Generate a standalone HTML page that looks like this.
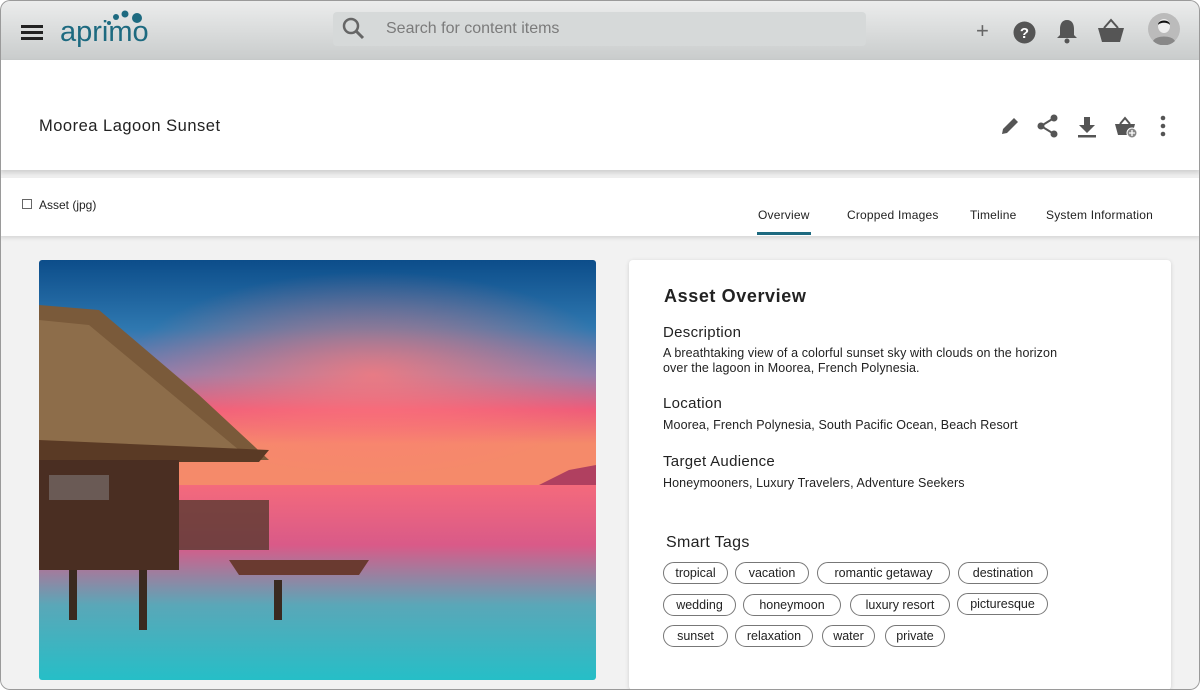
<!DOCTYPE html>
<html><head><meta charset="utf-8"><style>
*{box-sizing:border-box;margin:0;padding:0}
body{width:1200px;height:670px;overflow:hidden;background:#fff;font-family:"Liberation Sans",sans-serif;color:#222}
.frame{position:absolute;left:0;top:0;width:1200px;height:690px;border-radius:10px;overflow:hidden;background:#f2f2f2}
.bord{position:absolute;left:0;top:0;width:1200px;height:690px;border:1px solid #9a9a9a;border-radius:10px;pointer-events:none}
.hdr{position:absolute;left:0;top:0;width:100%;height:60px;background:linear-gradient(#eceded,#c9cccc)}
.search{position:absolute;left:333px;top:12px;width:533px;height:34px;background:#d6d9d9;border-radius:4px;color:#7b7b7b;font-size:16px;line-height:34px;padding-left:53px}
.title{position:absolute;left:0;top:60px;width:100%;height:110px;background:#fff;box-shadow:0 3px 5px rgba(0,0,0,.15)}
.tabs{position:absolute;left:0;top:178px;width:100%;height:58px;background:#fff;box-shadow:0 2px 4px rgba(0,0,0,.12)}
.tab{position:absolute;top:30px;font-size:12px;color:#222;letter-spacing:.2px}
.card{position:absolute;left:629px;top:260px;width:542px;height:430px;background:#fff;border-radius:4px;box-shadow:0 1px 4px rgba(0,0,0,.15)}
.card h2{position:absolute;left:35px;top:26px;font-size:18px;font-weight:bold;letter-spacing:.6px;color:#222}
.h3{position:absolute;left:34px;font-size:15px;color:#222;letter-spacing:.3px}
.p{position:absolute;left:34px;font-size:12.5px;line-height:15px;color:#222;letter-spacing:.1px}
.tag{position:absolute;height:22px;border:1px solid #777;border-radius:11px;font-size:12.5px;line-height:20px;text-align:center;color:#222}
</style></head><body><div class="frame">
<div class="hdr">
<div style="position:absolute;left:21px;top:25px;width:22px;height:3px;background:#222;box-shadow:0 6px 0 #222,0 12px 0 #222"></div>
<div style="position:absolute;left:60px;top:16px;font-size:29px;color:#1d6a80;letter-spacing:0">aprimo</div>
<svg style="position:absolute;left:104px;top:9px" width="42" height="18"><circle cx="5" cy="14" r="2" fill="#1d6a80"/><circle cx="12" cy="8" r="3" fill="#1d6a80"/><circle cx="21" cy="5" r="3.5" fill="#1d6a80"/><circle cx="33" cy="9" r="5" fill="#1d6a80"/></svg>
<div class="search">Search for content items</div>
<svg style="position:absolute;left:342px;top:17px" width="24" height="24"><circle cx="9" cy="9" r="7" fill="none" stroke="#666" stroke-width="2.5"/><path d="M14 14l7 7" stroke="#666" stroke-width="3"/></svg>
<div style="position:absolute;left:976px;top:18px;font-size:22px;color:#666">+</div>
<svg style="position:absolute;left:1013px;top:21px" width="23" height="23"><circle cx="11.5" cy="11.5" r="11" fill="#555"/><text x="11.5" y="17" font-size="15" font-weight="bold" fill="#fff" text-anchor="middle" font-family="Liberation Sans">?</text></svg>
<svg style="position:absolute;left:1055px;top:18px" width="24" height="28"><path d="M12 2c-5 0-7 4-7 9v6l-3 3h20l-3-3v-6c0-5-2-9-7-9z" fill="#555"/><circle cx="12" cy="23" r="2.5" fill="#555"/></svg>
<svg style="position:absolute;left:1096px;top:17px" width="30" height="28"><path d="M2 11h26l-4 14H6z" fill="#555"/><path d="M8 11l7-8 7 8" fill="none" stroke="#555" stroke-width="2"/></svg>
<svg style="position:absolute;left:1148px;top:13px" width="32" height="32"><circle cx="16" cy="16" r="16" fill="#bbb"/><ellipse cx="16" cy="13" rx="6" ry="7" fill="#eee"/><path d="M10 12c0-6 12-6 12 0c-2-3-10-3-12 0z" fill="#111"/><path d="M5 28c3-6 19-6 22 0a16 16 0 0 1-22 0z" fill="#888"/></svg>
</div>
<div class="title">
<div style="position:absolute;left:39px;top:57px;font-size:16.5px;letter-spacing:.5px;color:#222">Moorea Lagoon Sunset</div>
<svg style="position:absolute;left:999px;top:55px" width="22" height="22"><path d="M3 19l1-5 11-11 4 4-11 11z" fill="#555"/></svg>
<svg style="position:absolute;left:1037px;top:54px" width="22" height="24"><circle cx="17" cy="4" r="3.5" fill="#555"/><circle cx="4" cy="12" r="3.5" fill="#555"/><circle cx="17" cy="20" r="3.5" fill="#555"/><path d="M17 4L4 12l13 8" fill="none" stroke="#555" stroke-width="2"/></svg>
<svg style="position:absolute;left:1076px;top:56px" width="22" height="22"><path d="M8 1h6v8h5l-8 8-8-8h5z" fill="#555"/><rect x="2" y="19" width="18" height="2.5" fill="#555"/></svg>
<svg style="position:absolute;left:1114px;top:55px" width="26" height="24"><path d="M1 9h20l-3 11H4z" fill="#555"/><path d="M6 9l5-6 5 6" fill="none" stroke="#555" stroke-width="2"/><circle cx="18" cy="18" r="5" fill="#888" stroke="#fff"/><path d="M18 15v6M15 18h6" stroke="#fff" stroke-width="1.3"/></svg>
<svg style="position:absolute;left:1158px;top:55px" width="10" height="22"><circle cx="5" cy="3" r="2.3" fill="#555"/><circle cx="5" cy="11" r="2.3" fill="#555"/><circle cx="5" cy="19" r="2.3" fill="#555"/></svg>
</div>
<div class="tabs">
<div style="position:absolute;left:22px;top:21px;width:10px;height:10px;border:1px solid #666"></div>
<div style="position:absolute;left:39px;top:20px;font-size:12px">Asset (jpg)</div>
<div class="tab" style="left:758px">Overview</div>
<div style="position:absolute;left:757px;top:54px;width:54px;height:3px;background:#1d6a80"></div>
<div class="tab" style="left:847px">Cropped Images</div>
<div class="tab" style="left:970px">Timeline</div>
<div class="tab" style="left:1046px">System Information</div>
</div>
<svg style="position:absolute;left:39px;top:260px;border-radius:3px" width="557" height="420">
<defs>
<linearGradient id="sky" x1="0" y1="0" x2="0" y2="1"><stop offset="0" stop-color="#0c4d8a"/><stop offset=".3" stop-color="#2f78b0"/><stop offset=".5" stop-color="#8a7fb0"/><stop offset=".65" stop-color="#ee5a7a"/><stop offset=".8" stop-color="#f58a6a"/></linearGradient>
<linearGradient id="sea" x1="0" y1="0" x2="0" y2="1"><stop offset="0" stop-color="#f46a7c"/><stop offset=".3" stop-color="#d95a88"/><stop offset=".6" stop-color="#5aa7b8"/><stop offset="1" stop-color="#22c0c8"/></linearGradient>
<radialGradient id="glow" cx=".6" cy=".5" r=".45"><stop offset="0" stop-color="#ff7a7a" stop-opacity=".8"/><stop offset="1" stop-color="#ff7a7a" stop-opacity="0"/></radialGradient>
</defs>
<rect width="557" height="230" fill="url(#sky)"/>
<rect width="557" height="230" fill="url(#glow)"/>
<path d="M500 225l30-15 27-5v20z" fill="#b04060"/>
<rect y="225" width="557" height="200" fill="url(#sea)"/>
<path d="M0 45l60 5 100 85 70 65H0z" fill="#7a5a3a"/>
<path d="M0 60l50 5 90 75 60 50H0z" fill="#9a7a55" opacity=".6"/>
<path d="M0 180l230 10-10 12H0z" fill="#5a3a25"/>
<rect x="0" y="200" width="140" height="110" fill="#4a2e22"/>
<rect x="10" y="215" width="60" height="25" fill="#6a5a55"/>
<path d="M140 240h90v50h-90z" fill="#5a3a30" opacity=".8"/>
<path d="M190 300h140l-10 15H200z" fill="#6a3a30"/>
<rect x="30" y="310" width="8" height="50" fill="#3a2a20"/><rect x="100" y="310" width="8" height="60" fill="#3a2a20"/><rect x="235" y="320" width="8" height="40" fill="#3a2a20"/>
</svg>
<div class="card">
<h2>Asset Overview</h2>
<div class="h3" style="top:64px">Description</div>
<div class="p" style="top:86px">A breathtaking view of a colorful sunset sky with clouds on the horizon<br>over the lagoon in Moorea, French Polynesia.</div>
<div class="h3" style="top:135px">Location</div>
<div class="p" style="top:158px">Moorea, French Polynesia, South Pacific Ocean, Beach Resort</div>
<div class="h3" style="top:193px">Target Audience</div>
<div class="p" style="top:216px">Honeymooners, Luxury Travelers, Adventure Seekers</div>
<div class="h3" style="top:274px;left:37px;font-size:16px">Smart Tags</div>
<div class="tag" style="left:34px;top:302px;width:65px">tropical</div>
<div class="tag" style="left:106px;top:302px;width:74px">vacation</div>
<div class="tag" style="left:188px;top:302px;width:133px">romantic getaway</div>
<div class="tag" style="left:329px;top:302px;width:90px">destination</div>
<div class="tag" style="left:34px;top:334px;width:73px">wedding</div>
<div class="tag" style="left:114px;top:334px;width:98px">honeymoon</div>
<div class="tag" style="left:221px;top:334px;width:100px">luxury resort</div>
<div class="tag" style="left:328px;top:333px;width:91px">picturesque</div>
<div class="tag" style="left:34px;top:365px;width:65px">sunset</div>
<div class="tag" style="left:106px;top:365px;width:78px">relaxation</div>
<div class="tag" style="left:193px;top:365px;width:53px">water</div>
<div class="tag" style="left:256px;top:365px;width:60px">private</div>
</div>
<div class="bord"></div>
</div></body></html>
